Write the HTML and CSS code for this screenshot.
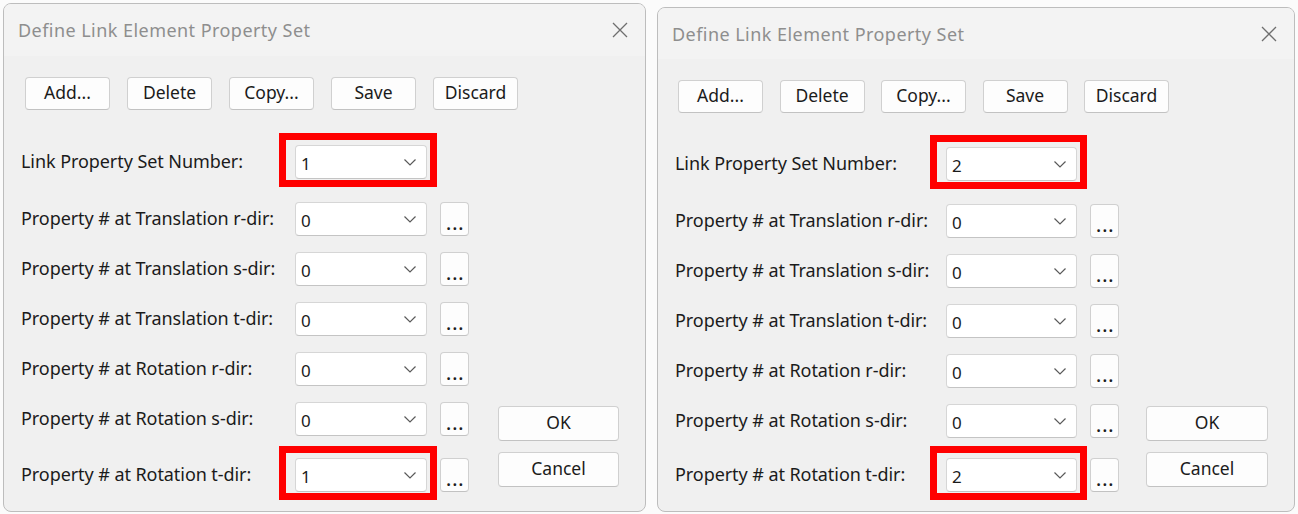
FILE: index.html
```html
<!DOCTYPE html>
<html lang="en">
<head>
<meta charset="utf-8">
<title>Define Link Element Property Set</title>
<link rel="stylesheet" href="styles.css">
</head>
<body>
<div class="screen">
  <section class="dialog dialog--left">
    <header class="titlebar">
      <span class="title">Define Link Element Property Set</span>
      <svg class="close" viewBox="0 0 16 16" width="16" height="16"><path d="M1 1L15 15M15 1L1 15" stroke="#6e6e6e" stroke-width="1.3" fill="none"/></svg>
    </header>
    <div class="toolbar">
      <button class="btn">Add...</button>
      <button class="btn">Delete</button>
      <button class="btn">Copy...</button>
      <button class="btn">Save</button>
      <button class="btn">Discard</button>
    </div>
    <div class="form">
      <div class="rows">
        <div class="row row--first">
          <span class="label">Link Property Set Number:</span>
          <div class="combo combo--marked"><span class="value">1</span><svg class="chev" viewBox="0 0 12 7" width="12" height="7"><path d="M0.5 0.5L6 6L11.5 0.5" stroke="#5a5a5a" stroke-width="1.2" fill="none"/></svg></div>
        </div>
        <div class="row row--second">
          <span class="label">Property # at Translation r-dir:</span>
          <div class="combo"><span class="value">0</span><svg class="chev" viewBox="0 0 12 7" width="12" height="7"><path d="M0.5 0.5L6 6L11.5 0.5" stroke="#5a5a5a" stroke-width="1.2" fill="none"/></svg></div>
          <button class="more">...</button>
        </div>
        <div class="row">
          <span class="label">Property # at Translation s-dir:</span>
          <div class="combo"><span class="value">0</span><svg class="chev" viewBox="0 0 12 7" width="12" height="7"><path d="M0.5 0.5L6 6L11.5 0.5" stroke="#5a5a5a" stroke-width="1.2" fill="none"/></svg></div>
          <button class="more">...</button>
        </div>
        <div class="row">
          <span class="label">Property # at Translation t-dir:</span>
          <div class="combo"><span class="value">0</span><svg class="chev" viewBox="0 0 12 7" width="12" height="7"><path d="M0.5 0.5L6 6L11.5 0.5" stroke="#5a5a5a" stroke-width="1.2" fill="none"/></svg></div>
          <button class="more">...</button>
        </div>
        <div class="row">
          <span class="label">Property # at Rotation r-dir:</span>
          <div class="combo"><span class="value">0</span><svg class="chev" viewBox="0 0 12 7" width="12" height="7"><path d="M0.5 0.5L6 6L11.5 0.5" stroke="#5a5a5a" stroke-width="1.2" fill="none"/></svg></div>
          <button class="more">...</button>
        </div>
        <div class="row">
          <span class="label">Property # at Rotation s-dir:</span>
          <div class="combo"><span class="value">0</span><svg class="chev" viewBox="0 0 12 7" width="12" height="7"><path d="M0.5 0.5L6 6L11.5 0.5" stroke="#5a5a5a" stroke-width="1.2" fill="none"/></svg></div>
          <button class="more">...</button>
        </div>
        <div class="row row--last">
          <span class="label">Property # at Rotation t-dir:</span>
          <div class="combo combo--marked"><span class="value">1</span><svg class="chev" viewBox="0 0 12 7" width="12" height="7"><path d="M0.5 0.5L6 6L11.5 0.5" stroke="#5a5a5a" stroke-width="1.2" fill="none"/></svg></div>
          <button class="more">...</button>
        </div>
      </div>
      <div class="actions">
        <button class="btn btn--wide">OK</button>
        <button class="btn btn--wide">Cancel</button>
      </div>
    </div>
  </section>

  <section class="dialog dialog--right">
    <header class="titlebar">
      <span class="title">Define Link Element Property Set</span>
      <svg class="close" viewBox="0 0 16 16" width="16" height="16"><path d="M1 1L15 15M15 1L1 15" stroke="#6e6e6e" stroke-width="1.3" fill="none"/></svg>
    </header>
    <div class="toolbar">
      <button class="btn">Add...</button>
      <button class="btn">Delete</button>
      <button class="btn">Copy...</button>
      <button class="btn">Save</button>
      <button class="btn">Discard</button>
    </div>
    <div class="form">
      <div class="rows">
        <div class="row row--first">
          <span class="label">Link Property Set Number:</span>
          <div class="combo combo--marked"><span class="value">2</span><svg class="chev" viewBox="0 0 12 7" width="12" height="7"><path d="M0.5 0.5L6 6L11.5 0.5" stroke="#5a5a5a" stroke-width="1.2" fill="none"/></svg></div>
        </div>
        <div class="row row--second">
          <span class="label">Property # at Translation r-dir:</span>
          <div class="combo"><span class="value">0</span><svg class="chev" viewBox="0 0 12 7" width="12" height="7"><path d="M0.5 0.5L6 6L11.5 0.5" stroke="#5a5a5a" stroke-width="1.2" fill="none"/></svg></div>
          <button class="more">...</button>
        </div>
        <div class="row">
          <span class="label">Property # at Translation s-dir:</span>
          <div class="combo"><span class="value">0</span><svg class="chev" viewBox="0 0 12 7" width="12" height="7"><path d="M0.5 0.5L6 6L11.5 0.5" stroke="#5a5a5a" stroke-width="1.2" fill="none"/></svg></div>
          <button class="more">...</button>
        </div>
        <div class="row">
          <span class="label">Property # at Translation t-dir:</span>
          <div class="combo"><span class="value">0</span><svg class="chev" viewBox="0 0 12 7" width="12" height="7"><path d="M0.5 0.5L6 6L11.5 0.5" stroke="#5a5a5a" stroke-width="1.2" fill="none"/></svg></div>
          <button class="more">...</button>
        </div>
        <div class="row">
          <span class="label">Property # at Rotation r-dir:</span>
          <div class="combo"><span class="value">0</span><svg class="chev" viewBox="0 0 12 7" width="12" height="7"><path d="M0.5 0.5L6 6L11.5 0.5" stroke="#5a5a5a" stroke-width="1.2" fill="none"/></svg></div>
          <button class="more">...</button>
        </div>
        <div class="row">
          <span class="label">Property # at Rotation s-dir:</span>
          <div class="combo"><span class="value">0</span><svg class="chev" viewBox="0 0 12 7" width="12" height="7"><path d="M0.5 0.5L6 6L11.5 0.5" stroke="#5a5a5a" stroke-width="1.2" fill="none"/></svg></div>
          <button class="more">...</button>
        </div>
        <div class="row row--last">
          <span class="label">Property # at Rotation t-dir:</span>
          <div class="combo combo--marked"><span class="value">2</span><svg class="chev" viewBox="0 0 12 7" width="12" height="7"><path d="M0.5 0.5L6 6L11.5 0.5" stroke="#5a5a5a" stroke-width="1.2" fill="none"/></svg></div>
          <button class="more">...</button>
        </div>
      </div>
      <div class="actions">
        <button class="btn btn--wide">OK</button>
        <button class="btn btn--wide">Cancel</button>
      </div>
    </div>
  </section>
</div>
</body>
</html>
```

FILE: styles.css
```css
* { box-sizing: border-box; }

html, body {
  margin: 0;
  padding: 0;
  background: #fbfbfb;
}

body {
  font-family: "Noto Sans", "Open Sans", Arial, sans-serif;
  color: #1b1b1b;
  width: 1298px;
  height: 514px;
  overflow: hidden;
}

.screen {
  display: flex;
  align-items: flex-start;
  padding: 3px 0 0 3px;
  gap: 11px;
}

.dialog {
  --label-w: 274px;
  --combo-w: 132px;
  --act-gap: 29px;
  --act-w: 121px;
  width: 643px;
  height: 509px;
  border: 1px solid #bdbdbd;
  border-radius: 8px;
  background: #f0f0f0;
  overflow: hidden;
  display: flex;
  flex-direction: column;
}

.dialog--right {
  --label-w: 271px;
  --combo-w: 131px;
  --act-gap: 27px;
  --act-w: 122px;
  width: 638px;
  height: 505px;
  margin-top: 4px;
}

.titlebar {
  height: 52px;
  flex: none;
  display: flex;
  align-items: center;
  justify-content: space-between;
  padding: 0 17px 0 14px;
  background: #f3f3f3;
}

.dialog--right .titlebar { height: 51px; }

.title {
  font-size: 18px;
  color: #8e8e8e;
  letter-spacing: 0.45px;
}

.close { display: block; }

.toolbar {
  display: flex;
  gap: 17px;
  margin-top: 21px;
  padding-left: 21px;
}

.dialog--right .toolbar { padding-left: 20px; gap: 16.5px; }

.btn {
  width: 85px;
  height: 33px;
  border: 1px solid #d0d0d0;
  border-bottom-color: #c2c2c2;
  border-radius: 4px;
  background: #fdfdfd;
  font-family: inherit;
  font-size: 17.5px;
  color: #1b1b1b;
  padding: 0 0 2px;
  line-height: 1;
}

.btn--wide {
  width: var(--act-w);
  height: 35px;
}

.form {
  display: flex;
  margin-top: 35px;
  padding-left: 17px;
}

.dialog--right .form { margin-top: 34px; }

.rows {
  display: flex;
  flex-direction: column;
}

.row {
  display: flex;
  align-items: center;
  height: 34px;
  margin-top: 16px;
}

.row--first { margin-top: 0; }
.row--second { margin-top: 23px; }
.row--last { margin-top: 22px; }
.dialog--right .row--last { margin-top: 20px; }

.label {
  width: var(--label-w);
  flex: none;
  font-size: 18px;
  letter-spacing: -0.07px;
  color: #1b1b1b;
  padding-bottom: 2px;
  white-space: nowrap;
}

.combo {
  position: relative;
  width: var(--combo-w);
  height: 34px;
  flex: none;
  display: flex;
  align-items: center;
  justify-content: space-between;
  padding: 0 10px 0 5px;
  background: #ffffff;
  border: 1px solid #d6d6d6;
  border-bottom-color: #c4c4c4;
  border-radius: 4px;
  font-size: 17px;
}

.value { padding-top: 3px; }

.chev { display: block; }

.combo--marked::after {
  content: "";
  position: absolute;
  top: -13px;
  bottom: -9px;
  left: -17px;
  right: -11px;
  border: 7px solid #ff0000;
}

.more {
  width: 29px;
  height: 34px;
  margin-left: 13px;
  flex: none;
  border: 1px solid #d0d0d0;
  border-bottom-color: #c2c2c2;
  border-radius: 4px;
  background: #fdfdfd;
  font-family: inherit;
  font-size: 17px;
  font-weight: 600;
  color: #1b1b1b;
  padding: 8px 0 0 2px;
  line-height: 1;
  letter-spacing: 1.5px;
}

.actions {
  display: flex;
  flex-direction: column;
  gap: 11px;
  align-self: flex-end;
  margin-left: var(--act-gap);
  margin-bottom: 5px;
}
```
